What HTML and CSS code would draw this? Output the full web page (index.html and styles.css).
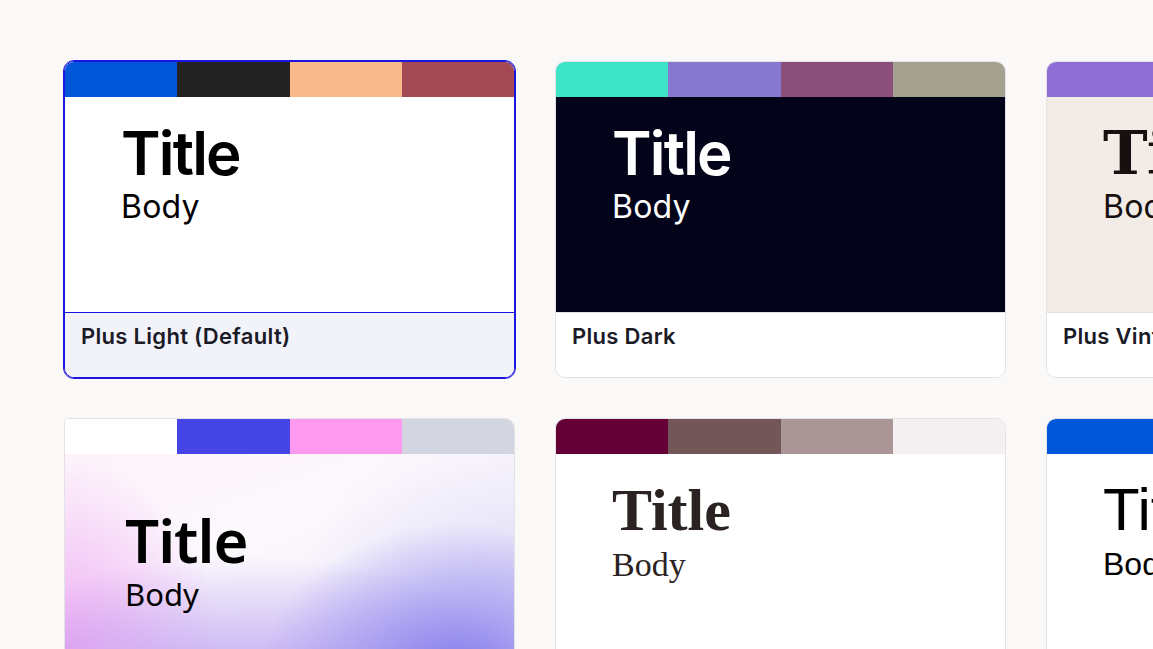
FILE: index.html
```html
<!DOCTYPE html>
<html lang="en">
<head>
<meta charset="utf-8">
<title>Themes</title>
<link rel="stylesheet" href="styles.css">
</head>
<body>
<div class="grid">
  <div class="card selected">
    <div class="strip"><span class="c-blue"></span><span class="c-black"></span><span class="c-peach"></span><span class="c-rose"></span></div>
    <div class="preview p-light">
      <div class="title t-inter">Title</div>
      <div class="body b-inter">Body</div>
    </div>
    <div class="label">Plus Light (Default)</div>
  </div>
  <div class="card">
    <div class="strip"><span class="c-teal"></span><span class="c-lav"></span><span class="c-plum"></span><span class="c-khaki"></span></div>
    <div class="preview p-dark">
      <div class="title t-inter">Title</div>
      <div class="body b-inter">Body</div>
    </div>
    <div class="label">Plus Dark</div>
  </div>
  <div class="card">
    <div class="strip"><span class="c-purple"></span><span class="c-purple"></span><span class="c-purple"></span><span class="c-purple"></span></div>
    <div class="preview p-vintage">
      <div class="title t-slab">Title</div>
      <div class="body b-inter">Body</div>
    </div>
    <div class="label">Plus Vintage</div>
  </div>
  <div class="card card-square">
    <div class="strip"><span class="c-white"></span><span class="c-indigo"></span><span class="c-pink"></span><span class="c-mist"></span></div>
    <div class="preview p-gradient">
      <div class="title t-round">Title</div>
      <div class="body b-round">Body</div>
    </div>
    <div class="label">Plus Gradient</div>
  </div>
  <div class="card">
    <div class="strip"><span class="c-wine"></span><span class="c-mauve"></span><span class="c-dust"></span><span class="c-snow"></span></div>
    <div class="preview p-light">
      <div class="title t-serif">Title</div>
      <div class="body b-serif">Body</div>
    </div>
    <div class="label">Plus Serif</div>
  </div>
  <div class="card">
    <div class="strip"><span class="c-blue"></span><span class="c-blue"></span><span class="c-blue"></span><span class="c-blue"></span></div>
    <div class="preview p-light">
      <div class="title t-arial">Title</div>
      <div class="body b-arial">Body</div>
    </div>
    <div class="label">Plus Classic</div>
  </div>
</div>
</body>
</html>
```

FILE: styles.css
```css
html, body {
  margin: 0;
  padding: 0;
  background: #faf9f8;
  overflow: hidden;
  font-family: Inter, "Liberation Sans", sans-serif;
}
.grid {
  display: grid;
  grid-template-columns: repeat(3, 451px);
  column-gap: 40px;
  row-gap: 40px;
  padding: 61px 0 0 64px;
  width: max-content;
}
.card {
  display: flex;
  flex-direction: column;
  border: 1px solid #e3e2e6;
  border-radius: 10px;
  overflow: hidden;
  background: #fff;
}
.card-square {
  border-radius: 4px 10px 10px 10px;
}
.card.selected {
  border-color: #1c14e0;
  outline: 1px solid #1c14e0;
}
.strip {
  display: grid;
  grid-template-columns: repeat(4, 1fr);
  height: 35px;
}
.preview {
  height: 215px;
  padding: 20px 56px 0;
  box-sizing: border-box;
  color: #000;
}
.label {
  height: 65px;
  box-sizing: border-box;
  padding: 10px 16px 0;
  border-top: 1px solid #e3e2e6;
  font-family: Inter, sans-serif;
  font-weight: 600;
  font-size: 22px;
  line-height: 26px;
  letter-spacing: 0.3px;
  color: #1b1b28;
  background: #fff;
}
.selected .label {
  background: #f2f3f8;
  border-top-color: #1c14e0;
}

.title { font-size: 60px; line-height: 72px; white-space: nowrap; }
.body { font-size: 32px; line-height: 36px; white-space: nowrap; }

.t-inter { font-family: Inter, sans-serif; font-weight: 600; letter-spacing: -1.8px; }
.b-inter { font-family: Inter, sans-serif; font-weight: 400; letter-spacing: 0.2px; }
.t-slab { font-family: "DejaVu Serif", serif; font-weight: 700; letter-spacing: -1px; }
.t-round { font-family: "Noto Sans", sans-serif; font-weight: 600; letter-spacing: -1px; }
.b-round { font-family: "Noto Sans", sans-serif; font-weight: 400; font-size: 31px; }
.t-serif { font-family: "Liberation Serif", serif; font-weight: 700; color: #2b2222; }
.b-serif { font-family: "Liberation Serif", serif; font-weight: 400; color: #2b2222; font-size: 34px; line-height: 38px; }
.t-arial { font-family: "Liberation Sans", Arial, sans-serif; font-weight: 400; }
.b-arial { font-family: "Liberation Sans", Arial, sans-serif; font-weight: 400; font-size: 32px; }

.p-light { background: #fff; }
.p-dark { background: #03031a; color: #fff; }
.p-vintage { background: #f2ebe6; color: #171010; }
.p-gradient {
  padding: 50px 60px 0;
  background:
    radial-gradient(ellipse 200px 150px at 88% 102%, rgba(128, 118, 236, 0.95), rgba(128, 118, 236, 0) 100%),
    radial-gradient(ellipse 300px 140px at 40% 112%, rgba(178, 150, 240, 0.85), rgba(178, 150, 240, 0) 100%),
    radial-gradient(ellipse 160px 210px at 0% 100%, rgba(236, 158, 240, 0.95), rgba(236, 158, 240, 0) 100%),
    radial-gradient(ellipse 220px 160px at 100% 60%, rgba(215, 210, 247, 0.6), rgba(215, 210, 247, 0) 100%),
    linear-gradient(160deg, #fdf2fb 0%, #fcf9fd 40%, #ece8f8 100%);
}

.c-blue { background: #0057d9; }
.c-black { background: #222222; }
.c-peach { background: #f9b98b; }
.c-rose { background: #a34a55; }
.c-teal { background: #3ee4c8; }
.c-lav { background: #8677cf; }
.c-plum { background: #8b4f7c; }
.c-khaki { background: #a4a190; }
.c-purple { background: #8f6ed5; }
.c-white { background: #ffffff; }
.c-indigo { background: #4545e6; }
.c-pink { background: #fd99ee; }
.c-mist { background: #d3d5e1; }
.c-wine { background: #640036; }
.c-mauve { background: #735758; }
.c-dust { background: #aa9597; }
.c-snow { background: #f4eff0; }
```
